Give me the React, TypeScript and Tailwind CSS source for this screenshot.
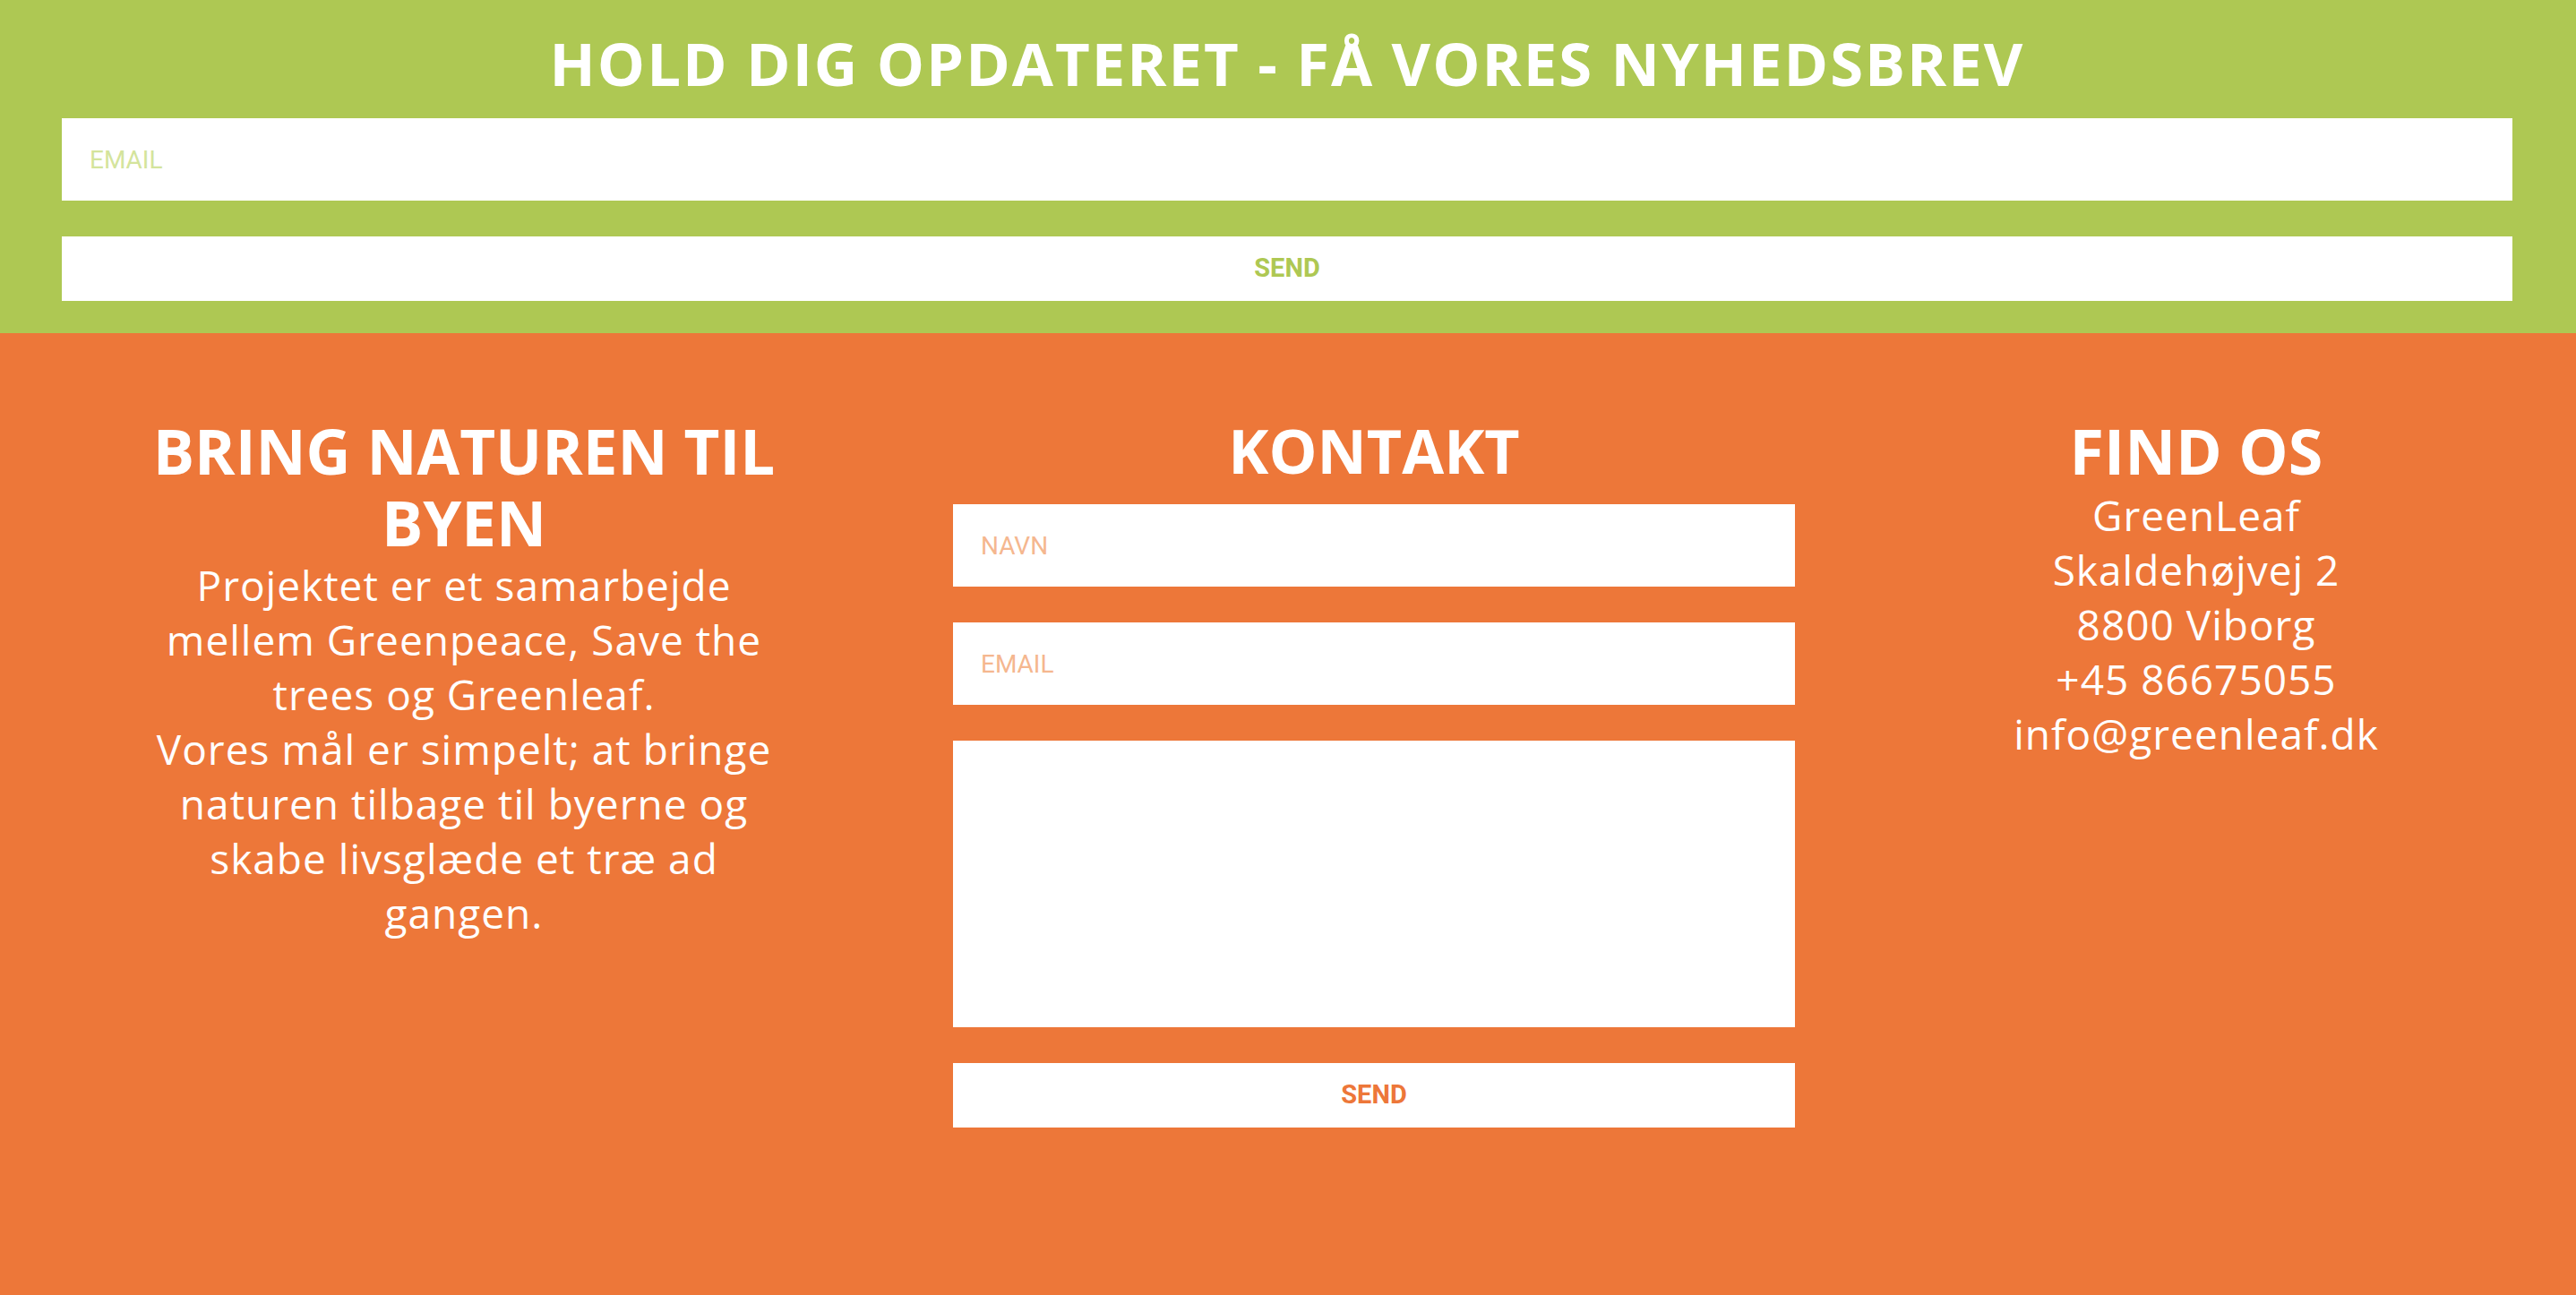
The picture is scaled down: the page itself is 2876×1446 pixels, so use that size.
const headingFont = { fontFamily: '"Open Sans", "Noto Sans", sans-serif' };

const aboutLines = [
  "Projektet er et samarbejde",
  "mellem Greenpeace, Save the",
  "trees og Greenleaf.",
  "Vores mål er simpelt; at bringe",
  "naturen tilbage til byerne og",
  "skabe livsglæde et træ ad",
  "gangen.",
];

const addressLines = [
  "GreenLeaf",
  "Skaldehøjvej 2",
  "8800 Viborg",
  "+45 86675055",
  "info@greenleaf.dk",
];

export default function App() {
  return (
    <div className="min-h-screen flex flex-col bg-[#ed7739] font-['Open_Sans',_'Noto_Sans',_sans-serif] text-white">
      {/* Newsletter */}
      <section className="bg-[#aec853] pl-[69px] pr-[71px] pt-[32px] pb-[36px]">
        <h2 className="text-center text-[67px] leading-[77px] font-bold tracking-[2px] mb-[23px]">
          HOLD DIG OPDATERET - FÅ VORES NYHEDSBREV
        </h2>
        <form className="flex flex-col gap-[40px]" onSubmit={(e) => e.preventDefault()}>
          <input
            type="email"
            placeholder="EMAIL"
            className="h-[92px] w-full bg-white pl-[31px] text-[28px] font-['Roboto',_sans-serif] text-[#6b7d2a] placeholder:text-[#d4e49c] outline-none"
          />
          <button
            type="submit"
            className="h-[72px] w-full bg-white text-[29px] font-bold font-['Roboto',_sans-serif] text-[#aec853]"
          >
            SEND
          </button>
        </form>
      </section>

      {/* Footer columns */}
      <section className="flex-1 flex items-start pt-[91px] pb-[187px]">
        <div className="ml-[138px] w-[760px] text-center">
          <h2 className="text-[69px] leading-[80px] font-bold" style={headingFont}>
            <span className="block whitespace-nowrap">BRING NATUREN TIL</span>
            <span className="block">BYEN</span>
          </h2>
          <p className="text-[46px] leading-[61px] tracking-[1px]">
            {aboutLines.map((line) => (
              <span key={line} className="block whitespace-nowrap">
                {line}
              </span>
            ))}
          </p>
        </div>

        <div className="ml-[166px] w-[940px]">
          <h2 className="text-center text-[68px] leading-[80px] font-bold mb-[20px]" style={headingFont}>
            KONTAKT
          </h2>
          <form className="flex flex-col gap-[40px]" onSubmit={(e) => e.preventDefault()}>
            <input
              type="text"
              placeholder="NAVN"
              className="h-[92px] w-full bg-white pl-[31px] text-[28px] font-['Roboto',_sans-serif] text-[#9a4a1f] placeholder:text-[#f5b78f] outline-none"
            />
            <input
              type="email"
              placeholder="EMAIL"
              className="h-[92px] w-full bg-white pl-[31px] text-[28px] font-['Roboto',_sans-serif] text-[#9a4a1f] placeholder:text-[#f5b78f] outline-none"
            />
            <textarea className="h-[320px] w-full bg-white p-[31px] text-[28px] font-['Roboto',_sans-serif] text-[#9a4a1f] resize-none outline-none" />
            <button
              type="submit"
              className="h-[72px] w-full bg-white text-[29px] font-bold font-['Roboto',_sans-serif] text-[#ed7739]"
            >
              SEND
            </button>
          </form>
        </div>

        <div className="ml-[198px] w-[500px] text-center">
          <h2 className="text-[70px] leading-[80px] font-bold" style={headingFont}>
            FIND OS
          </h2>
          <address className="not-italic text-[46px] leading-[61px] tracking-[1px] mt-[2px]">
            {addressLines.map((line) => (
              <span key={line} className="block">
                {line}
              </span>
            ))}
          </address>
        </div>
      </section>
    </div>
  );
}
